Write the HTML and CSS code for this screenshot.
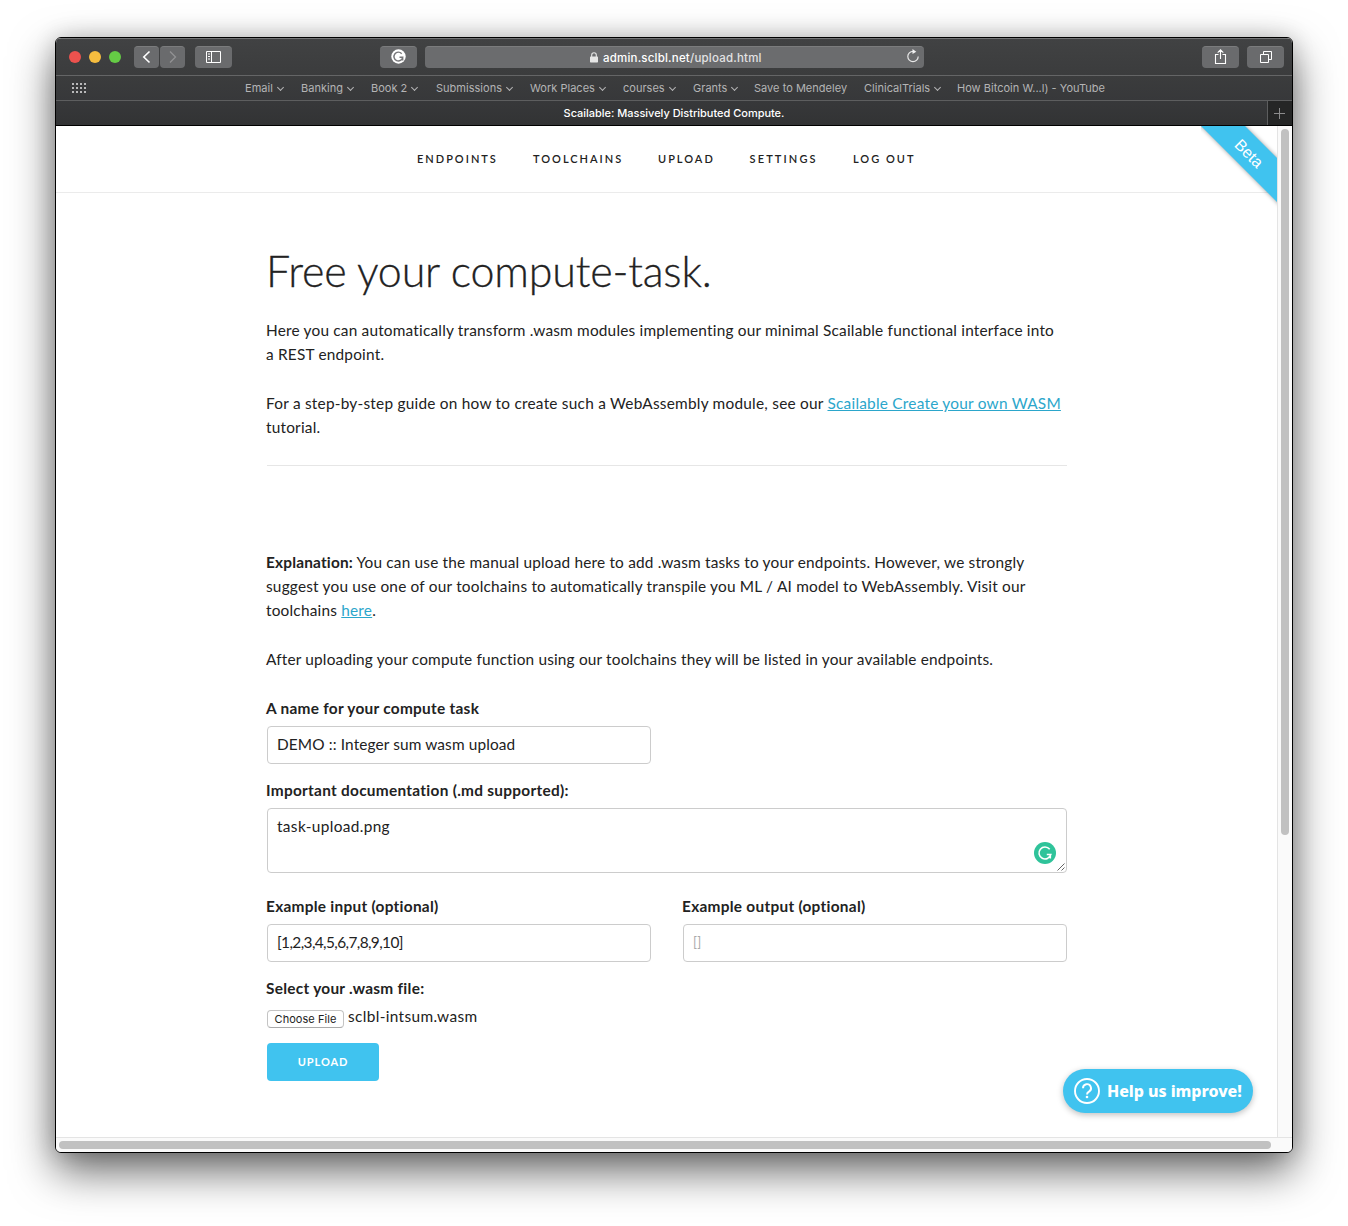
FILE: index.html
```
<!DOCTYPE html>
<html lang="en">
<head>
<meta charset="utf-8">
<title>Scailable: Massively Distributed Compute.</title>
<link rel="stylesheet" href="styles.css">
</head>
<body>
<div class="window">
  <div class="toolbar">
    <div class="lights"><i class="red"></i><i class="amber"></i><i class="green"></i></div>
    <div class="history">
      <span class="tool"><svg width="25" height="22"><path d="M15.5 5.5 9.8 11l5.7 5.5" fill="none" stroke="#fff" stroke-width="1.6"/></svg></span>
      <span class="tool"><svg width="25" height="22"><path d="M10 5.500l5.500 5.500-5.500 5.500" fill="none" stroke="#929294" stroke-width="1.300"/></svg></span>
    </div>
    <span class="tool wide"><svg width="37" height="22"><path d="M11.500 5.500h14v11h-14zM16.500 5.500v11M13 8h2M13 10.500h2M13 13h2" fill="none" stroke="#fff"/></svg></span>
    <span class="tool wide grammar"><svg width="37" height="22"><circle cx="18.500" cy="10.500" r="7.200" fill="#fff"/><path d="M21.700 7.700a4.400 4.400 0 1 0 1 3.600h-3.200M22.700 11v3.500" fill="none" stroke="#77777a" stroke-width="1.400"/></svg></span>
    <div class="address">
      <svg class="lock" width="8" height="11"><rect y="4.500" width="8" height="6" rx=".7" fill="#e6e6e6"/><path d="M1.700 5V3.100a2.300 2.300 0 0 1 4.600 0V5" fill="none" stroke="#e6e6e6" stroke-width="1.100"/></svg>
      <span class="url">admin.sclbl.net<span>/upload.html</span></span>
      <svg class="reload" width="14" height="15"><path d="M7 2.300a5.200 5.200 0 1 0 5.200 5.200" fill="none" stroke="#e8e8e8" stroke-width="1.200"/><path d="M6.500 0 10.300 2.700 6.500 5z" fill="#f2f2f2"/></svg>
    </div>
    <span class="tool wide share"><svg width="37" height="22"><path d="M16.500 8.500h-3v9h10v-9h-3M18.500 13V4M15.700 6.700l2.800-2.800 2.800 2.800" fill="none" stroke="#fff" stroke-width="1.100"/></svg></span>
    <span class="tool wide"><svg width="37" height="22"><path d="M13.500 8.500h8v8h-8zM16.500 8V5.500h8v8H22" fill="none" stroke="#fff"/></svg></span>
  </div>
  <div class="favorites">
    <svg class="grid" width="15" height="11" fill="#b9b9ba"><path d="M0 0h2v2H0zM4 0h2v2H4zM8 0h2v2H8zM12 0h2v2h-2zM0 4h2v2H0zM4 4h2v2H4zM8 4h2v2H8zM12 4h2v2h-2zM0 8h2v2H0zM4 8h2v2H4zM8 8h2v2H8zM12 8h2v2h-2z"/></svg>
    <div class="links">
      <span class="menu">Email</span><span class="menu">Banking</span><span class="menu">Book 2</span><span class="menu">Submissions</span><span class="menu">Work Places</span><span class="menu">courses</span><span class="menu">Grants</span><span>Save to Mendeley</span><span class="menu">ClinicalTrials</span><span>How Bitcoin W...l) - YouTube</span>
    </div>
  </div>
  <div class="tabs"><div class="tab">Scailable: Massively Distributed Compute.</div><div class="new-tab"><svg width="11" height="11"><path d="M5.500 0v11M0 5.500h11" stroke="#8c8c8d"/></svg></div></div>
  <div class="viewport">
    <div class="page">
      <nav class="nav"><a>ENDPOINTS</a><a>TOOLCHAINS</a><a>UPLOAD</a><a class="settings">SETTINGS</a><a>LOG OUT</a></nav>
      <svg class="ribbon" width="80" height="82"><path class="band" d="M-4-4 80 80V36L36-8z"/><text transform="translate(48 27.500) rotate(45)" text-anchor="middle" y="5.500">Beta</text></svg>
      <main class="content">
        <h1>Free your compute-task.</h1>
        <p class="intro"><span class="l1">Here you can automatically transform .wasm modules implementing our minimal Scailable functional interface into</span><br><span class="l2">a REST endpoint.</span></p>
        <p><span class="l3">For a step-by-step guide on how to create such a WebAssembly module, see our <a>Scailable Create your own WASM</a></span><br><span class="l4">tutorial.</span></p>
        <hr>
        <p><span class="l5"><b>Explanation:</b> You can use the manual upload here to add .wasm tasks to your endpoints. However, we strongly</span><br><span class="l6">suggest you use one of our toolchains to automatically transpile you ML / AI model to WebAssembly. Visit our</span><br><span class="l7">toolchains <a>here</a>.</span></p>
        <p><span class="l8">After uploading your compute function using our toolchains they will be listed in your available endpoints.</span></p>
        <form class="form">
          <label class="field half"><b>A name for your compute task</b><span class="box"><span class="v1">DEMO :: Integer sum wasm upload</span></span></label>
          <label class="field"><b>Important documentation (.md supported):</b><span class="box area"><span class="v2">task-upload.png</span>
            <svg class="checker" width="22" height="22"><circle cx="11" cy="11" r="11" fill="#2fc39a"/><path d="M15.700 7.200a6 6 0 1 0 1.100 5.300h-4M16.300 16.500v-4" fill="none" stroke="#fff" stroke-width="1.600"/></svg>
            <svg class="grip" width="8" height="8"><path d="M.5 7.500l7-7M4.500 7.500l3-3" stroke="#555" stroke-width=".9"/></svg></span></label>
          <div class="pair">
            <label class="field"><b>Example input (optional)</b><span class="box"><span class="v3">[1,2,3,4,5,6,7,8,9,10]</span></span></label>
            <label class="field"><b>Example output (optional)</b><span class="box hint">[]</span></label>
          </div>
          <b>Select your .wasm file:</b>
          <div class="file"><span class="choose">Choose File</span><span class="v4">sclbl-intsum.wasm</span></div>
          <div class="submit">UPLOAD</div>
        </form>
      </main>
      <div class="help"><svg width="26" height="26" fill="none" stroke="#fff"><circle cx="13" cy="13" r="12" stroke-width="1.900"/><path d="M9 10.300a4 4 0 1 1 6 3.300q-2 1.100-2 2.900" stroke-width="1.900"/><circle cx="13" cy="19" r="1.300" fill="#fff" stroke="none"/></svg><span>Help us improve!</span></div>
    </div>
    <div class="vscroll"><i></i></div>
    <div class="hscroll"><i></i></div>
  </div>
</div>
</body>
</html>
```

FILE: styles.css
```
* { box-sizing: border-box; }
body { margin: 0; background: #fff; height: 1226px; padding: 37px 55px; overflow: hidden; }
svg { display: block; flex: none; }
.window {
  width: 1238px; height: 1116px; border: 1px solid #000; border-radius: 6px; overflow: hidden;
  display: flex; flex-direction: column; background: #fff;
  box-shadow: 0 18px 44px rgba(0,0,0,.6), 0 0 22px rgba(0,0,0,.16);
  font-family: Inter, "Liberation Sans", sans-serif;
}
.toolbar {
  height: 38px; flex: none; display: flex; align-items: center; padding: 0 8px 0 13px;
  background: linear-gradient(#414243, #3b3c3d); border-top: 1px solid #747576; border-bottom: 1px solid #646566;
}
.lights { display: flex; gap: 8px; width: 65px; }
.lights i { width: 12px; height: 12px; border-radius: 50%; }
.red { background: #ec524e; }
.amber { background: #f6bd3f; }
.green { background: #65cb45; }
.tool { height: 22px; border-radius: 4px; background: #6a6b6d; border-top: 1px solid #7b7c7d; }
.tool svg { margin-top: -1px; }
.history { display: flex; gap: 1px; width: 61px; }
.wide { width: 37px; }
.grammar { margin-left: 148px; }
.address {
  margin-left: 8px; width: 499px; height: 22px; border-radius: 4px; background: #6b6c6e; border-top: 1px solid #7b7c7d;
  display: flex; align-items: center; color: #fff; padding: 0 4px 0 165px;
}
.url { margin-left: 5px; font-size: 11.5px; font-weight: 500; white-space: nowrap; letter-spacing: .2px; }
.url span { color: #e2e2e3; }
.reload { margin-left: auto; margin-bottom: 2px; }
.share { margin-left: auto; margin-right: 8px; }
.favorites {
  height: 25px; flex: none; display: flex; align-items: center; padding-left: 16px;
  background: linear-gradient(#3b3c3d, #37383a); border-bottom: 1px solid #5d5e5f;
}
.links {
  margin-left: 158px; display: grid; grid-template-columns: 56px 70px 65px 94px 93px 70px 61px 110px 93px 150px;
  color: #b4b4b5; font-size: 11px; line-height: 22px; letter-spacing: .02px; white-space: nowrap;
}
.menu::after {
  content: ""; display: inline-block; width: 4px; height: 4px; box-sizing: content-box; margin: 0 0 2px 5px;
  border: solid #b4b4b5; border-width: 0 1.500px 1.500px 0; transform: rotate(45deg);
}
.tabs { height: 25px; flex: none; display: flex; background: linear-gradient(#37383a, #323334); border-bottom: 1px solid #000; }
.tab { flex: 1; text-align: center; padding-left: 25px; color: #fff; font-size: 11px; font-weight: 500; line-height: 24px; letter-spacing: -.02px; }
.new-tab { width: 25px; background: #252626; border-left: 1px solid #5d5e5f; display: flex; align-items: center; padding-left: 6px; }
.viewport { flex: 1; display: grid; grid-template: 1fr 15px / 1fr 15px; background: #fafafa; }
.page { position: relative; overflow: hidden; background: #fff; color: #222; font: 15.4px/24px Lato, "Open Sans", sans-serif; letter-spacing: .2px; }
.nav {
  height: 67px; border-bottom: 1px solid #ebebeb; padding-left: 361px; display: grid;
  grid-template-columns: 116px 125px 91.500px 103.500px 70px; line-height: 66px; font-size: 11px; font-weight: 600; letter-spacing: 2px;
}
.settings { letter-spacing: 2.150px; }
.ribbon { position: absolute; right: -4px; top: 0; fill: #fff; font: 16px "Liberation Sans", sans-serif; letter-spacing: 0; }
.band { fill: #40c3ef; filter: drop-shadow(0 0 2px rgba(0,0,0,.4)); }
.content { width: 800px; margin-left: 211px; white-space: nowrap; }
h1 { margin: 53px 0 22px -1px; font-size: 43px; line-height: 50px; font-weight: 300; letter-spacing: -.17px; -webkit-text-stroke: .3px #222; }
p { margin: 0 0 25px -1px; }
p a { color: #2ba6cb; text-decoration: underline; }
.l1 { letter-spacing: .19px; }
.l3 { letter-spacing: .23px; }
.l5 { letter-spacing: .18px; }
.l8 { letter-spacing: .17px; }
hr { border: 0; border-top: 1px solid #e6e6e6; margin: 26px 0 84px; }
b { font-weight: 700; line-height: 24px; }
.form { display: flex; flex-direction: column; }
.form b { margin-left: -1px; letter-spacing: .28px; }
.field { display: flex; flex-direction: column; gap: 6px; margin-bottom: 14px; }
.half { width: 384px; }
.box { height: 38px; border: 1px solid #ccc; border-radius: 4px; padding: 5px 9px; }
.area { height: 65px; position: relative; margin-bottom: 7px; }
.checker { position: absolute; right: 10px; bottom: 8px; }
.grip { position: absolute; right: 1px; bottom: 1px; }
.pair { display: grid; grid-template-columns: 1fr 1fr; gap: 32px; }
.v1 { letter-spacing: .12px; }
.v2 { letter-spacing: .35px; }
.v3 { letter-spacing: -.6px; }
.v4 { letter-spacing: .35px; }
.hint { color: #aaa; font-size: 13px; }
.file { height: 24px; margin-top: 4px; display: flex; gap: 4px; }
.choose {
  width: 77px; height: 18px; margin-top: 6px; border: 1px solid #c4c4c4; border-bottom-color: #aaa; border-radius: 4px;
  text-align: center; font: 11px/16px Inter, sans-serif; letter-spacing: .05px;
}
.submit {
  width: 112px; height: 38px; margin-top: 15px; border-radius: 4px; background: #40c3ef; color: #fff;
  text-align: center; font-size: 11px; font-weight: 700; line-height: 38px; letter-spacing: .9px;
}
.help {
  position: absolute; left: 1007px; top: 943px; width: 190px; height: 44px; border-radius: 22px; background: #40c3ef;
  box-shadow: 0 2px 6px rgba(0,0,0,.25); color: #fff; display: flex; align-items: center; gap: 7px; padding-left: 11px;
  font: 800 16px/44px "Noto Sans", "Open Sans", sans-serif; letter-spacing: -.05px; white-space: nowrap;
}
.vscroll { border-left: 1px solid #e4e4e4; padding: 3px; }
.vscroll i { display: block; width: 8px; height: 706px; border-radius: 4px; background: #c1c1c1; }
.hscroll { border-top: 1px solid #e4e4e4; grid-column: 1 / -1; padding: 3px; }
.hscroll i { display: block; width: 1212px; height: 8px; border-radius: 4px; background: #c1c1c1; }
```
